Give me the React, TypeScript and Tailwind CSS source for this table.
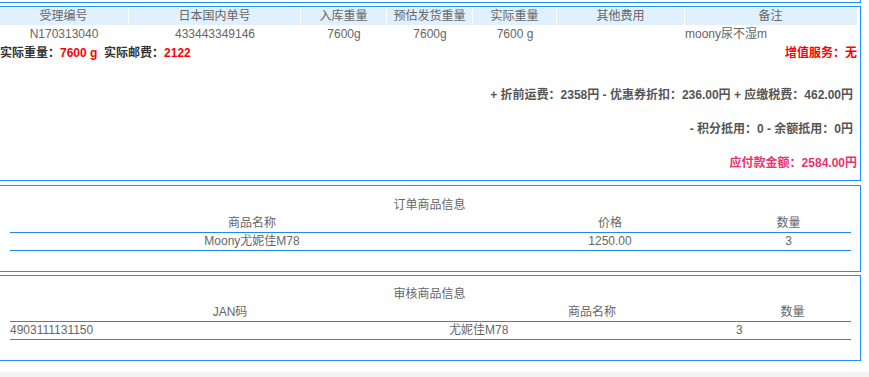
import React from "react";

const font = { fontFamily: '"Liberation Sans", Arial, "Noto Sans CJK SC", sans-serif' };

const headCols = [
    { label: "受理编号", w: "w-[130px]" },
    { label: "日本国内单号", w: "w-[172px]" },
    { label: "入库重量", w: "w-[86px]" },
    { label: "预估发货重量", w: "w-[86px]" },
    { label: "实际重量", w: "w-[84px]" },
    { label: "其他费用", w: "w-[128px]" },
    { label: "备注", w: "w-[171px]" },
];

export default function App() {
    return (
        <div style={font} className="w-[869px] h-[377px] overflow-hidden bg-[#f3f3f3] text-[12px] text-[#666]">
            <div className="bg-white pb-[11px]">
                <div className="ml-[-2px] w-[863px]">
                    {/* previous box stub */}
                    <div className="h-[3px] border-b border-r border-[#1e90ff]"></div>

                    {/* order summary box */}
                    <div className="mt-[3px] border border-[#1e90ff] pt-[1px] pr-[3px] pb-[8px]">
                        <div className="flex h-[17px] leading-[17px] bg-[#e1f0fd]">
                            {headCols.map((c, i) => (
                                <div key={i} className={`${c.w} text-center ${i < 6 ? "border-r border-white" : ""}`}>{c.label}</div>
                            ))}
                        </div>
                        <div className="flex h-[18px] pt-[1px] leading-[17px]">
                            <div className="w-[130px] text-center">N170313040</div>
                            <div className="w-[172px] text-center">433443349146</div>
                            <div className="w-[86px] text-center">7600g</div>
                            <div className="w-[86px] text-center">7600g</div>
                            <div className="w-[84px] text-center">7600 g</div>
                            <div className="w-[128px] text-center"></div>
                            <div className="w-[171px] text-left">moony尿不湿m</div>
                        </div>
                        <div className="flex justify-between h-[19px] pt-[1px] leading-[18px] font-bold text-[#333] pl-[1px]">
                            <div>
                                实际重量：<span className="text-[#ff0000]">7600 g</span>&nbsp; 实际邮费：<span className="text-[#ff0000]">2122</span>
                            </div>
                            <div className="text-[#ff0000]">增值服务：无</div>
                        </div>
                        <div className="mt-[25px] h-[17px] leading-[17px] text-right font-bold text-[#555] pr-[4px]">
                            + 折前运费：2358円 - 优惠券折扣：236.00円 + 应缴税费：462.00円
                        </div>
                        <div className="mt-[17px] h-[17px] leading-[17px] text-right font-bold text-[#555] pr-[4px]">
                            - 积分抵用：0 - 余额抵用：0円
                        </div>
                        <div className="mt-[17px] h-[17px] leading-[17px] text-right font-bold text-[#e8336b]">
                            应付款金额：2584.00円
                        </div>
                    </div>

                    {/* order goods */}
                    <div className="mt-[4px] border border-[#1e90ff] pt-[11px] pl-[11px] pr-[9px] pb-[20px]">
                        <div className="h-[17px] leading-[17px] text-center pr-[2px]">订单商品信息</div>
                        <div className="flex h-[19px] leading-[19px] border-b border-[#1e8ae6]">
                            <div className="w-[484px] text-center">商品名称</div>
                            <div className="w-[232px] text-center">价格</div>
                            <div className="flex-1 text-center">数量</div>
                        </div>
                        <div className="flex h-[18px] leading-[17px] border-b border-[#1e8ae6]">
                            <div className="w-[484px] text-center">Moony尤妮佳M78</div>
                            <div className="w-[232px] text-center">1250.00</div>
                            <div className="flex-1 text-center">3</div>
                        </div>
                    </div>

                    {/* audited goods */}
                    <div className="mt-[3px] border border-[#1e90ff] pt-[10px] pl-[11px] pr-[9px] pb-[20px]">
                        <div className="h-[17px] leading-[17px] text-center pr-[2px]">审核商品信息</div>
                        <div className="flex h-[19px] leading-[19px] border-b border-[#1e8ae6]">
                            <div className="w-[440px] text-center">JAN码</div>
                            <div className="w-[284px] text-center">商品名称</div>
                            <div className="flex-1 text-center">数量</div>
                        </div>
                        <div className="flex h-[18px] leading-[17px] border-b border-[#1e8ae6]">
                            <div className="w-[439px] text-left">4903111131150</div>
                            <div className="w-[287px] text-left">尤妮佳M78</div>
                            <div className="flex-1 text-left">3</div>
                        </div>
                    </div>
                </div>
            </div>
        </div>
    );
}
